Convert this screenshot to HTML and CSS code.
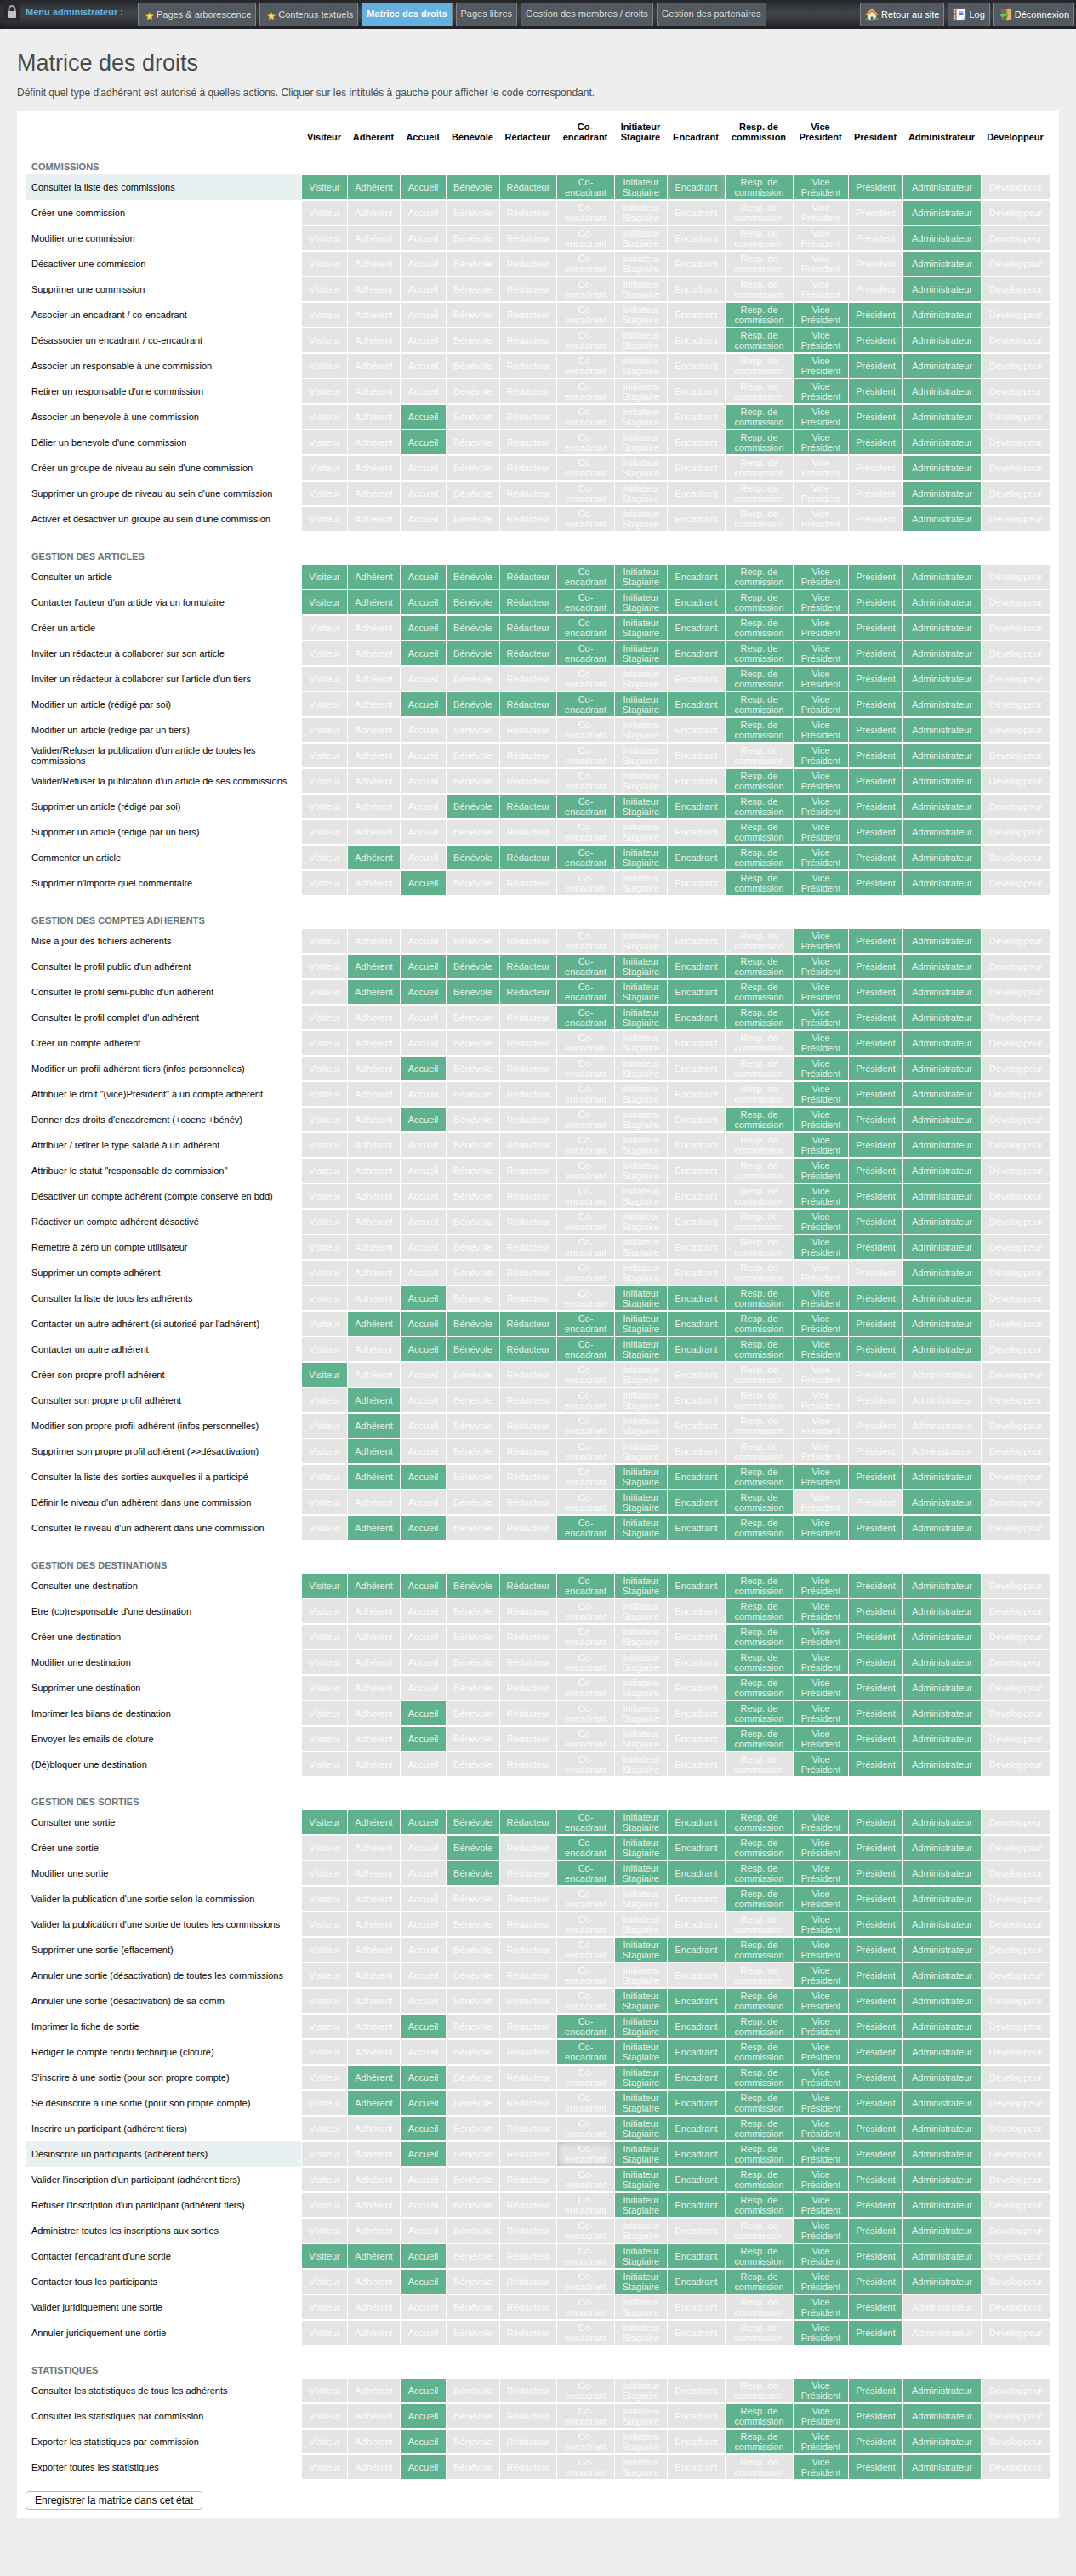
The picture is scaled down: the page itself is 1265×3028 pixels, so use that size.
FILE: index.html
```html
<!DOCTYPE html>
<html lang="fr">
<head>
<meta charset="utf-8">
<meta name="viewport" content="width=device-width, initial-scale=1">
<title>Matrice des droits</title>
<link rel="stylesheet" href="styles.css">
</head>
<body>
<header class="admin-bar">
  <p class="admin-title">
    <svg class="lock" width="20" height="20" viewBox="0 0 20 20" aria-hidden="true"><rect width="20" height="20" rx="3" fill="#26292b"/><path d="M6.500 10V6.500a3.500 3.500 0 0 1 7 0V10" fill="none" stroke="#b8b8b8" stroke-width="2"/><rect x="5" y="9" width="10" height="8" rx="1" fill="#d2d2d2"/></svg>
    Menu administrateur :
  </p>
  <nav class="admin-nav" aria-label="Menu administrateur">
    <a class="tab tab-star" href="#"><svg class="star" width="10" height="10" viewBox="0 0 10 10" aria-hidden="true"><path d="M5 .5 6.400 3.500 9.700 3.800 7.200 6 8 9.300 5 7.600 2 9.300 2.800 6 .3 3.800 3.600 3.500Z" fill="#ffd84a" stroke="#c78e22" stroke-width=".6"/></svg>Pages &amp; arborescence</a>
    <a class="tab tab-star" href="#"><svg class="star" width="10" height="10" viewBox="0 0 10 10" aria-hidden="true"><path d="M5 .5 6.400 3.500 9.700 3.800 7.200 6 8 9.300 5 7.600 2 9.300 2.800 6 .3 3.800 3.600 3.500Z" fill="#ffd84a" stroke="#c78e22" stroke-width=".6"/></svg>Contenus textuels</a>
    <a class="tab tab-active" href="#" aria-current="page">Matrice des droits</a>
    <a class="tab" href="#">Pages libres</a>
    <a class="tab" href="#">Gestion des membres / droits</a>
    <a class="tab" href="#">Gestion des partenaires</a>
  </nav>
  <nav class="admin-nav user-nav" aria-label="Session">
    <a class="tab tab-icon" href="#"><svg width="16" height="16" viewBox="0 0 16 16" aria-hidden="true"><path d="M3 8 8 3.500 13 8v7H3Z" fill="#f3efe6" stroke="#a8a49a" stroke-width=".6"/><path d="M6.500 15v-4.500h3V15Z" fill="#59616b"/><path d="M1 9 8 2l7 7" fill="none" stroke="#9c5b1c" stroke-width="3.400"/><path d="M1.300 8.700 8 2l6.700 6.700" fill="none" stroke="#e9a04b" stroke-width="2"/><path d="M.5 15v-2.500l2-1 2.500 1.500V15ZM11 15v-2l2-1.500 2.500 1V15Z" fill="#4fa33a"/></svg>Retour au site</a>
    <a class="tab tab-icon" href="#"><svg width="16" height="16" viewBox="0 0 16 16" aria-hidden="true"><rect x="2" y="1" width="13" height="14" fill="#f6f8fb" stroke="#8d97a5" stroke-width=".5"/><rect x="2.500" y="1" width="2" height="14" fill="#b5562c"/><path d="M7 5h5.500M7 6.500h5.500M7 8.500h5.500" stroke="#4c86d8"/><path d="M.5 2.500h3M.5 5h3M.5 7.500h3M.5 10h3M.5 12.500h3" stroke="#d8dbe0"/><path d="m10 15 5-5v5Z" fill="#bac6d6"/></svg>Log</a>
    <a class="tab tab-icon" href="#"><svg width="16" height="16" viewBox="0 0 16 16" aria-hidden="true"><path d="M3 1h11v13H3Z" fill="#6b6f66"/><path d="M9 1h6v13l-5 2-1-1Z" fill="#d9984a" stroke="#9b6427" stroke-width=".7"/><path d="M10.500 2.500 14 2v11l-3.500 1.500Z" fill="#e9b46c"/><path d="M1 9l5-4v2.500h4v3H6V13Z" fill="#6cc24a" stroke="#2c7a1e" stroke-width=".7"/></svg>Déconnexion</a>
  </nav>
</header>
<main class="page">
  <h1 class="page-title">Matrice des droits</h1>
  <p class="intro">Définit quel type d'adhérent est autorisé à quelles actions. Cliquer sur les intitulés à gauche pour afficher le code correspondant.</p>
  <form class="panel">
    <table class="matrix" id="matrix">
      <colgroup>
        <col><col class="w54"><col class="w62"><col class="w54"><col class="w63"><col class="w67"><col class="w68"><col class="w62"><col class="w68"><col class="w80"><col class="w65"><col class="w64"><col class="w92"><col class="w81">
      </colgroup>
    </table>
    <button class="save" type="button">Enregistrer la matrice dans cet état</button>
  </form>
</main>
<script src="matrix.js"></script>
</body>
</html>
```
FILE: styles.css
```css
* { box-sizing: border-box; }

body {
  margin: 0;
  background: #eee;
  color: #000;
  font: 11px/12px "Liberation Sans", Arial, sans-serif;
}

.admin-bar {
  display: flex;
  align-items: flex-start;
  height: 34px;
  padding: 3px 2px 3px 4px;
  background: linear-gradient(#2b2e31, #3e4245 40%, #3b3f42 60%, #222227);
  box-shadow: inset 0 0 8px #1c1c1e;
  white-space: nowrap;
}

.admin-title {
  display: flex;
  align-items: center;
  gap: 6px;
  width: 158px;
  height: 22px;
  margin: 0;
  color: #62afde;
  font-weight: bold;
}

.lock { opacity: .9; }

.admin-nav { display: flex; gap: 4px; }
.user-nav { margin-left: auto; }

.tab {
  display: flex;
  align-items: center;
  height: 28px;
  padding: 0 5px 3px;
  border: 1px solid #828282;
  background: #525960;
  color: #ddd;
  text-decoration: none;
}

.tab-star { gap: 3px; padding: 0 5px 0 8px; }
.star { margin-top: 3px; }
.tab-active { background: #64b0e0; color: #fff; font-weight: bold; }
.tab-icon { gap: 3px; padding: 0 5px; color: #fff; }

.page { padding: 24px 20px 68px; }

.page-title {
  margin: 0 0 11px;
  color: #4a4a4a;
  font-size: 27px;
  font-weight: normal;
  line-height: 32px;
}

.intro {
  margin: 0 0 13px;
  color: #4a4a4a;
  font-size: 12px;
  line-height: 16px;
}

.panel { padding: 10px 11px 10px 10px; background: #fff; }

.matrix {
  width: 100%;
  table-layout: fixed;
  border-collapse: collapse;
}

.w54 { width: 54px; }
.w62 { width: 62px; }
.w63 { width: 63px; }
.w64 { width: 64px; }
.w65 { width: 65px; }
.w67 { width: 67px; }
.w68 { width: 68px; }
.w80 { width: 80px; }
.w81 { width: 81px; }
.w92 { width: 92px; }

.matrix th, .matrix td { padding: 0; }

.role {
  height: 27px;
  vertical-align: bottom;
  text-align: center;
}

.matrix .section {
  height: 38px;
  padding: 0 7px 3px;
  color: #6c7476;
  text-align: left;
  vertical-align: bottom;
}

.matrix .action {
  height: 30px;
  padding: 0 7px;
  font-weight: normal;
  text-align: left;
  vertical-align: middle;
}

.matrix .hovered { background: #e8f0f2; }

.matrix .right { padding: 1px 0 1px 1px; }

.cell { position: relative; display: block; cursor: pointer; }

.box {
  position: absolute;
  inset: 0;
  margin: 0;
  opacity: 0;
}

.name {
  display: flex;
  align-items: center;
  justify-content: center;
  height: 28px;
  padding: 0 4px;
  background: #e4e4e4;
  color: #fcfcfc;
  text-align: center;
}

.box:checked + .name { background: #60b28f; color: #e2f3eb; }

.glow .name { box-shadow: inset 0 0 8px #b8b8b8; }
.glow .box:checked + .name { box-shadow: inset 0 0 10px #aaa; }

.save {
  display: block;
  height: 22px;
  margin-top: 13px;
  padding: 0 10px;
  border: 1px solid #b4b4b4;
  border-radius: 4px;
  background: #fff;
  color: #000;
  font: 12px/14px "Liberation Sans", Arial, sans-serif;
}
```
FILE: matrix.js
```js
const roles = ["Visiteur", "Adhérent", "Accueil", "Bénévole", "Rédacteur", "Co-encadrant",
  "Initiateur Stagiaire", "Encadrant", "Resp. de commission", "Vice Président",
  "Président", "Administrateur", "Développeur"];

// One flag per role, in the order above.
const sections = [
  ["COMMISSIONS", [
    ["Consulter la liste des commissions", "1111111111110", 7],
    ["Créer une commission", "0000000000010"],
    ["Modifier une commission", "0000000000010"],
    ["Désactiver une commission", "0000000000010"],
    ["Supprimer une commission", "0000000000010"],
    ["Associer un encadrant / co-encadrant", "0000000011110"],
    ["Désassocier un encadrant / co-encadrant", "0000000011110"],
    ["Associer un responsable à une commission", "0000000001110"],
    ["Retirer un responsable d'une commission", "0000000001110"],
    ["Associer un benevole à une commission", "0010000011110"],
    ["Délier un benevole d'une commission", "0010000011110"],
    ["Créer un groupe de niveau au sein d'une commission", "0000000000010"],
    ["Supprimer un groupe de niveau au sein d'une commission", "0000000000010"],
    ["Activer et désactiver un groupe au sein d'une commission", "0000000000010"]
  ]],
  ["GESTION DES ARTICLES", [
    ["Consulter un article", "1111111111110"],
    ["Contacter l'auteur d'un article via un formulaire", "1111111111110"],
    ["Créer un article", "0011111111110"],
    ["Inviter un rédacteur à collaborer sur son article", "0011111111110"],
    ["Inviter un rédacteur à collaborer sur l'article d'un tiers", "0000000011110"],
    ["Modifier un article (rédigé par soi)", "0011111111110"],
    ["Modifier un article (rédigé par un tiers)", "0000000011110"],
    ["Valider/Refuser la publication d'un article de toutes les commissions", "0000000001110"],
    ["Valider/Refuser la publication d'un article de ses commissions", "0000000011110"],
    ["Supprimer un article (rédigé par soi)", "0001111111110"],
    ["Supprimer un article (rédigé par un tiers)", "0000000011110"],
    ["Commenter un article", "0101111111110"],
    ["Supprimer n'importe quel commentaire", "0010000011110"]
  ]],
  ["GESTION DES COMPTES ADHERENTS", [
    ["Mise à jour des fichiers adhérents", "0000000001110"],
    ["Consulter le profil public d'un adhérent", "0111111111110"],
    ["Consulter le profil semi-public d'un adhérent", "0111111111110"],
    ["Consulter le profil complet d'un adhérent", "0000011111110"],
    ["Créer un compte adhérent", "0000000001110"],
    ["Modifier un profil adhérent tiers (infos personnelles)", "0010000001110"],
    ["Attribuer le droit \"(vice)Président\" à un compte adhérent", "0000000001110"],
    ["Donner des droits d'encadrement (+coenc +bénév)", "0010000011110"],
    ["Attribuer / retirer le type salarié à un adhérent", "0000000001110"],
    ["Attribuer le statut \"responsable de commission\"", "0000000001110"],
    ["Désactiver un compte adhérent (compte conservé en bdd)", "0000000001110"],
    ["Réactiver un compte adhérent désactivé", "0000000001110"],
    ["Remettre à zéro un compte utilisateur", "0000000001110"],
    ["Supprimer un compte adhérent", "0000000000010"],
    ["Consulter la liste de tous les adhérents", "0010001111110"],
    ["Contacter un autre adhérent (si autorisé par l'adhérent)", "0111111111110"],
    ["Contacter un autre adhérent", "0011111111110"],
    ["Créer son propre profil adhérent", "1000000000000"],
    ["Consulter son propre profil adhérent", "0100000000000"],
    ["Modifier son propre profil adhérent (infos personnelles)", "0100000000000"],
    ["Supprimer son propre profil adhérent (>>désactivation)", "0100000000000"],
    ["Consulter la liste des sorties auxquelles il a participé", "0110001111110"],
    ["Définir le niveau d'un adhérent dans une commission", "0000001110010"],
    ["Consulter le niveau d'un adhérent dans une commission", "0110011111110"]
  ]],
  ["GESTION DES DESTINATIONS", [
    ["Consulter une destination", "1111111111110"],
    ["Etre (co)responsable d'une destination", "0000000011110"],
    ["Créer une destination", "0000000011110"],
    ["Modifier une destination", "0000000011110"],
    ["Supprimer une destination", "0000000011110"],
    ["Imprimer les bilans de destination", "0010000011110"],
    ["Envoyer les emails de cloture", "0010000011110"],
    ["(Dé)bloquer une destination", "0000000001110"]
  ]],
  ["GESTION DES SORTIES", [
    ["Consulter une sortie", "1111111111110"],
    ["Créer une sortie", "0001011111110"],
    ["Modifier une sortie", "0001011111110"],
    ["Valider la publication d'une sortie selon la commission", "0000000011110"],
    ["Valider la publication d'une sortie de toutes les commissions", "0000000001110"],
    ["Supprimer une sortie (effacement)", "0000001111110"],
    ["Annuler une sortie (désactivation) de toutes les commissions", "0000000001110"],
    ["Annuler une sortie (désactivation) de sa comm", "0000001111110"],
    ["Imprimer la fiche de sortie", "0010011111110"],
    ["Rédiger le compte rendu technique (cloture)", "0000011111110"],
    ["S'inscrire à une sortie (pour son propre compte)", "0110001111110"],
    ["Se désinscrire à une sortie (pour son propre compte)", "0110001111110"],
    ["Inscrire un participant (adhérent tiers)", "0010001111110"],
    ["Désinscrire un participants (adhérent tiers)", "0010001111110", 5],
    ["Valider l'inscription d'un participant (adhérent tiers)", "0000001111110"],
    ["Refuser l'inscription d'un participant (adhérent tiers)", "0000001111110"],
    ["Administrer toutes les inscriptions aux sorties", "0000000001110"],
    ["Contacter l'encadrant d'une sortie", "1110001111110"],
    ["Contacter tous les participants", "0010001111110"],
    ["Valider juridiquement une sortie", "0000000001100"],
    ["Annuler juridiquement une sortie", "0000000001100"]
  ]],
  ["STATISTIQUES", [
    ["Consulter les statistiques de tous les adhérents", "0010000001110"],
    ["Consulter les statistiques par commission", "0010000011110"],
    ["Exporter les statistiques par commission", "0010000011110"],
    ["Exporter toutes les statistiques", "0010000001110"]
  ]]
];

const headRow = `<thead><tr><td></td>${roles.map(r => `<th class="role" scope="col">${r}</th>`).join("")}</tr></thead>`;

// The optional third value marks the highlighted role of a row.
const row = ([action, flags, active]) => {
  const cells = roles.map((role, i) =>
    `<td class="right"><label class="cell${i === active ? " glow" : ""}"><input class="box" type="checkbox"${flags[i] === "1" ? " checked" : ""}><span class="name">${role}</span></label></td>`
  ).join("");
  const text = action.replace(/>/g, "&gt;");
  return `<tr><th class="action${active === undefined ? "" : " hovered"}" scope="row">${text}</th>${cells}</tr>`;
};

const bodies = sections.map(([title, rows]) =>
  `<tbody><tr><th class="section" colspan="14" scope="rowgroup">${title}</th></tr>${rows.map(row).join("")}</tbody>`
).join("");

document.getElementById("matrix").insertAdjacentHTML("beforeend", headRow + bodies);
```
